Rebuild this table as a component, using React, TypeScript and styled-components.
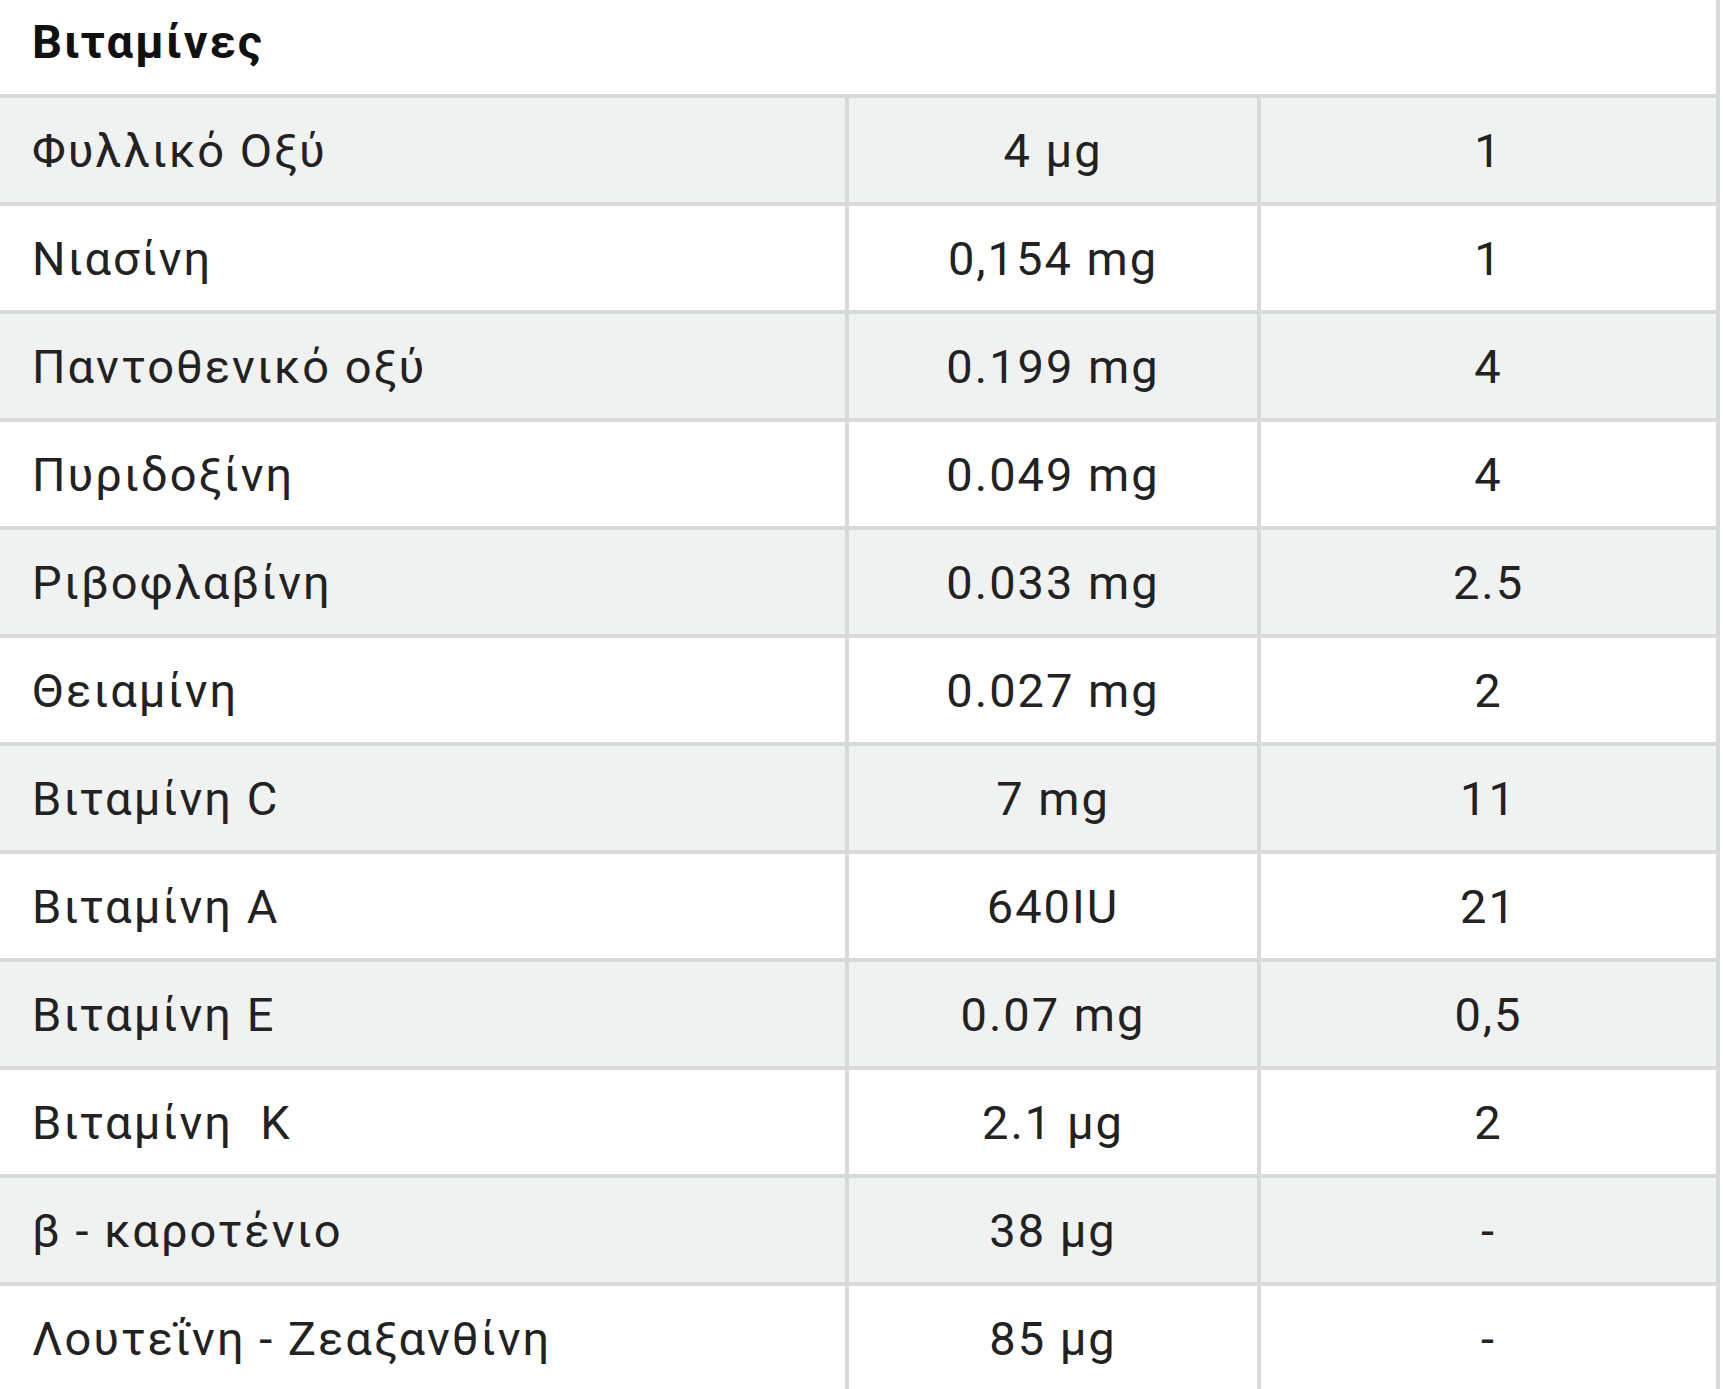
import React from 'react';
import styled, { createGlobalStyle } from 'styled-components';

const GlobalStyle = createGlobalStyle`
  html, body {
    margin: 0;
    padding: 0;
    background: #ffffff;
  }
  body {
    font-family: Roboto, "Noto Sans", "Liberation Sans", sans-serif;
    color: #222222;
  }
`;

const Table = styled.div`
  width: 1720px;
  display: flex;
  flex-direction: column;
`;

const HeaderRow = styled.div`
  height: 94px;
  box-sizing: border-box;
  display: flex;
  align-items: center;
  padding: 0 0 12px 32px;
  border-right: 4px solid #d8d9d9;
  font-size: 47px;
  letter-spacing: 2px;
  font-weight: 700;
  color: #111111;
`;

const Row = styled.div<{ $shaded?: boolean }>`
  display: grid;
  grid-template-columns: 849px 412px 459px;
  height: 108px;
  box-sizing: border-box;
  border-top: 4px solid #d8d9d9;
  background: ${props => (props.$shaded ? '#f0f1f1' : '#ffffff')};
`;

const Cell = styled.div<{ $align?: 'left' | 'center' }>`
  display: flex;
  align-items: center;
  justify-content: ${props => (props.$align === 'left' ? 'flex-start' : 'center')};
  padding-left: ${props => (props.$align === 'left' ? '32px' : '0')};
  border-right: 4px solid #d8d9d9;
  font-size: 47px;
  letter-spacing: 2px;
  white-space: pre;
`;

const vitamins = [
  ['Φυλλικό Οξύ', '4 μg', '1'],
  ['Νιασίνη', '0,154 mg', '1'],
  ['Παντοθενικό οξύ', '0.199 mg', '4'],
  ['Πυριδοξίνη', '0.049 mg', '4'],
  ['Ριβοφλαβίνη', '0.033 mg', '2.5'],
  ['Θειαμίνη', '0.027 mg', '2'],
  ['Βιταμίνη C', '7 mg', '11'],
  ['Βιταμίνη A', '640IU', '21'],
  ['Βιταμίνη E', '0.07 mg', '0,5'],
  ['Βιταμίνη  K', '2.1 μg', '2'],
  ['β - καροτένιο', '38 μg', '-'],
  ['Λουτεΐνη - Ζεαξανθίνη', '85 μg', '-'],
];

const App: React.FC = () => {
  return (
    <>
      <GlobalStyle />
      <Table>
        <HeaderRow>Βιταμίνες</HeaderRow>
        {vitamins.map(([name, amount, percent], i) => (
          <Row key={name} $shaded={i % 2 === 0}>
            <Cell $align="left">{name}</Cell>
            <Cell>{amount}</Cell>
            <Cell>{percent}</Cell>
          </Row>
        ))}
      </Table>
    </>
  );
};

export default App;
